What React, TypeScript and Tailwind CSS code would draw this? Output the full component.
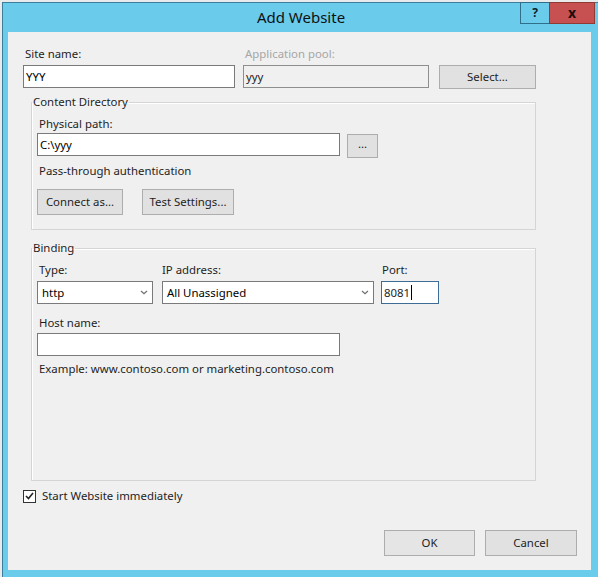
import React from 'react';

const font = "font-['Noto_Sans',sans-serif]";

function Chevron() {
    return (
        <svg width="8" height="5" viewBox="0 0 8 5" className="mr-[4px]">
            <path d="M1 1 L4 3.8 L7 1" fill="none" stroke="#707070" strokeWidth="1.2" />
        </svg>
    );
}

function Label({ children, disabled, className = 'ml-[2px]' }: { children: React.ReactNode; disabled?: boolean; className?: string }) {
    return (
        <div className={`h-[16px] leading-[16px] ${disabled ? 'text-[#a6a6a6]' : 'text-[#1e1e1e]'} ${className}`}>
            {children}
        </div>
    );
}

function TextBox({ value, className = '' }: { value?: string; className?: string }) {
    return (
        <div className={`flex h-[23px] items-center border border-[#7a7a7a] bg-white pl-[2px] leading-[16px] ${className}`}>
            {value}
        </div>
    );
}

function Button({ children, className = '' }: { children: React.ReactNode; className?: string }) {
    return (
        <div className={`flex items-center justify-center border border-[#adadad] bg-[#e1e1e1] leading-[16px] text-[#1e1e1e] ${className}`}>
            {children}
        </div>
    );
}

function DropDown({ value, className = '' }: { value: string; className?: string }) {
    return (
        <div className={`flex h-[23px] items-center justify-between border border-[#7a7a7a] bg-white pl-[4px] leading-[16px] ${className}`}>
            <span>{value}</span>
            <Chevron />
        </div>
    );
}

export default function App() {
    return (
        <div className={`relative h-[577px] w-[598px] overflow-hidden bg-[#e9eaeb] text-[11.4px] ${font}`}>
            <div className="relative ml-[2px] mt-[2px] h-[590px] w-[610px] border-l border-t border-[#3b7f9c] bg-[#6acbeb] px-[5px]">
                {/* title bar */}
                <div className="flex h-[29px] w-[584px] items-center justify-center pl-[2px] text-[15px] text-[#111]">
                    Add Website
                </div>
                <div className="absolute left-[517px] top-[-1px] flex h-[22px]">
                    <div className="flex w-[29px] items-center justify-center border border-[#2f6f8a] border-r-0 text-[12px] font-bold text-[#0d1f2a]">
                        ?
                    </div>
                    <div className="flex w-[46px] items-center justify-center border border-[#8f3a32] bg-[#c75050] pb-[2px] text-[14px] font-bold text-[#1a0d0d]">
                        x
                    </div>
                </div>

                {/* client area */}
                <div className="h-[538px] w-[583px] bg-[#f0f0f0] pl-[15px] pt-[14px]">
                    <div className="flex">
                        <div className="w-[212px]">
                            <Label>Site name:</Label>
                            <TextBox value="YYY" className="mt-[3px] w-[212px]" />
                        </div>
                        <div className="ml-[8px] w-[186px]">
                            <Label disabled>Application pool:</Label>
                            <div className="mt-[3px] flex h-[23px] w-[186px] items-center border border-[#8e8e8e] bg-[#f0f0f0] pl-[2px] text-[#1e1e1e]">
                                yyy
                            </div>
                        </div>
                        <Button className="ml-[10px] mt-[19px] h-[24px] w-[97px]">Select...</Button>
                    </div>

                    <fieldset className="ml-[8px] mt-[5px] h-[136px] w-[505px] border border-[#d5d5d5] pb-0 pl-[5px] pt-0 shadow-[inset_1px_1px_0_#fff]">
                        <legend className="-ml-[5px] px-[1px] leading-[16px] text-[#1e1e1e]">Content Directory</legend>
                        <div className="mt-[6px]">
                            <Label>Physical path:</Label>
                            <div className="mt-[1px] flex">
                                <TextBox value="C:\yyy" className="w-[303px]" />
                                <Button className="ml-[7px] mt-[1px] h-[24px] w-[31px] pb-[4px]">...</Button>
                            </div>
                            <div className="ml-[2px] mt-[5px] leading-[16px] text-[#1e1e1e]">Pass-through authentication</div>
                            <div className="mt-[10px] flex">
                                <Button className="h-[26px] w-[86px]">Connect as...</Button>
                                <Button className="ml-[19px] h-[26px] w-[92px]">Test Settings...</Button>
                            </div>
                        </div>
                    </fieldset>

                    <fieldset className="ml-[8px] mt-[10px] h-[241px] w-[505px] border border-[#d5d5d5] pb-0 pl-[5px] pt-0 shadow-[inset_1px_1px_0_#fff]">
                        <legend className="-ml-[5px] px-[1px] leading-[16px] text-[#1e1e1e]">Binding</legend>
                        <div className="mt-[6px] flex">
                            <div className="w-[116px]">
                                <Label>Type:</Label>
                                <DropDown value="http" className="mt-[3px] w-[116px]" />
                            </div>
                            <div className="ml-[9px] w-[212px]">
                                <Label className="ml-0">IP address:</Label>
                                <DropDown value="All Unassigned" className="mt-[3px] w-[212px]" />
                            </div>
                            <div className="ml-[7px] w-[58px]">
                                <Label className="ml-[1px]">Port:</Label>
                                <div className="mt-[3px] flex h-[23px] w-[58px] items-center border border-[#3d6d96] bg-white pl-[2px] text-[#1e1e1e]">
                                    8081<span className="ml-[1px] h-[15px] w-px bg-black" />
                                </div>
                            </div>
                        </div>
                        <div className="mt-[11px]">
                            <Label>Host name:</Label>
                            <TextBox className="mt-[2px] w-[303px]" />
                        </div>
                        <div className="ml-[2px] mt-[5px] leading-[16px] text-[#1e1e1e]">
                            Example: www.contoso.com or marketing.contoso.com
                        </div>
                    </fieldset>

                    <div className="mt-[7px] flex items-center">
                        <div className="flex h-[13px] w-[13px] items-center justify-center border border-[#333] bg-white">
                            <svg width="9" height="8" viewBox="0 0 9 8">
                                <path d="M1 4 L3.5 6.5 L8 1" fill="none" stroke="#222" strokeWidth="1.6" />
                            </svg>
                        </div>
                        <span className="ml-[6px] leading-[16px] text-[#1e1e1e]">Start Website immediately</span>
                    </div>

                    <div className="mr-[14px] mt-[26px] flex justify-end">
                        <Button className="h-[26px] w-[91px] border-[#5b8ec4] bg-[#e5e5e5]">OK</Button>
                        <Button className="ml-[10px] h-[26px] w-[92px]">Cancel</Button>
                    </div>
                </div>
            </div>
        </div>
    );
}
